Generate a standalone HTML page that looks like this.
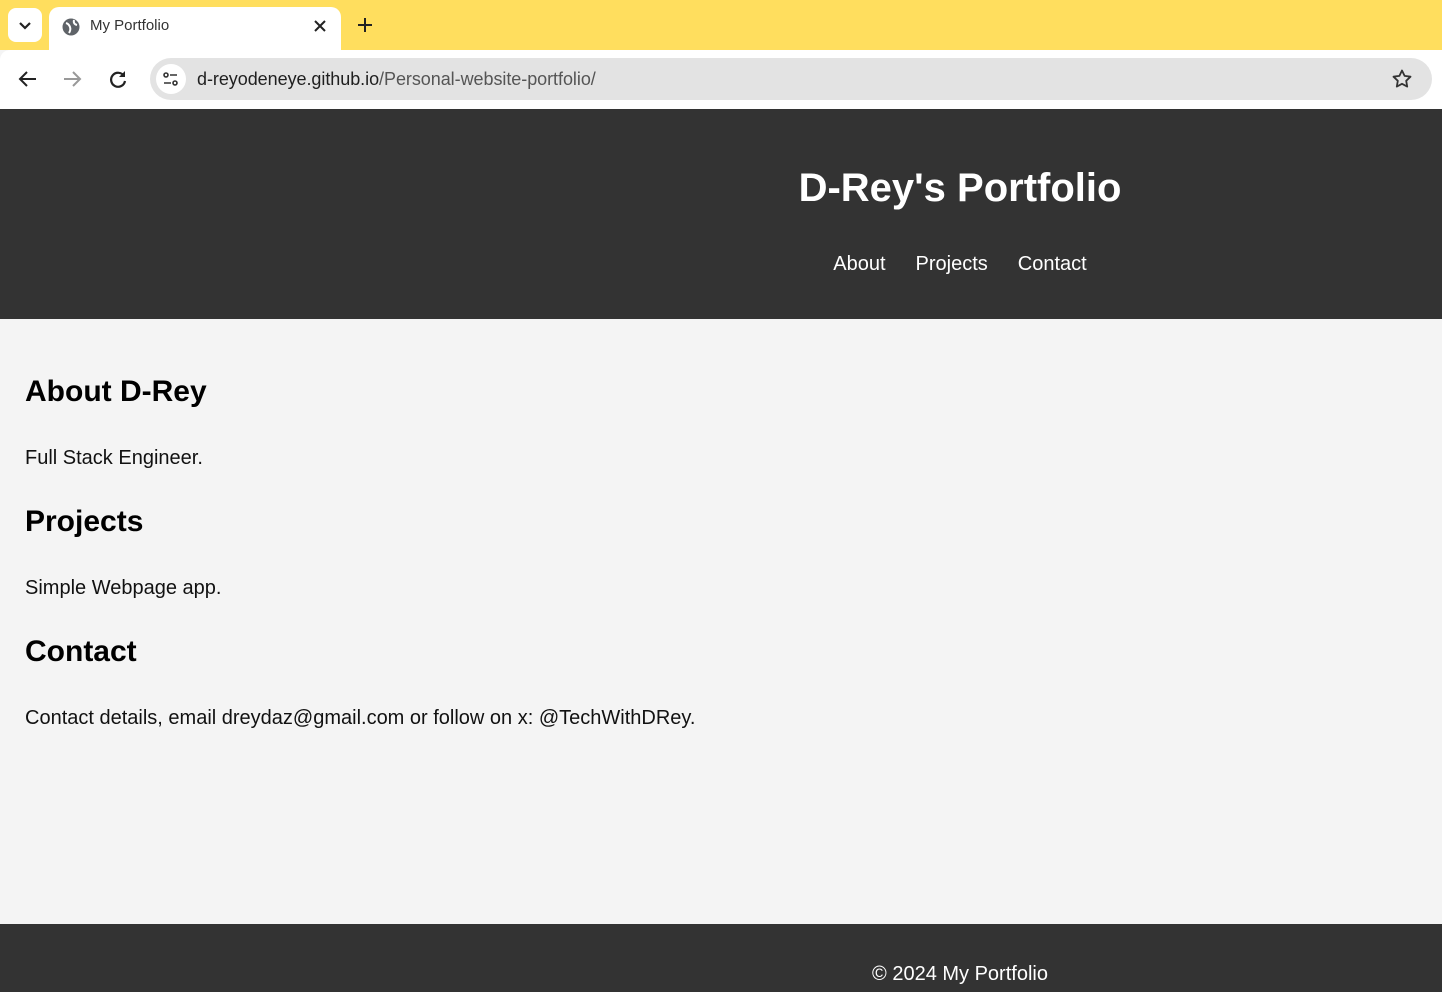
<!DOCTYPE html>
<html><head><style>
*{margin:0;padding:0;box-sizing:border-box}
body{width:1442px;height:992px;overflow:hidden;font-family:"Liberation Sans",Arial,sans-serif;background:#f4f4f4;position:relative}
.tabbar{position:absolute;top:0;left:0;width:1442px;height:50px;background:#ffde5e}
.dd{position:absolute;left:8px;top:8px;width:34px;height:34px;background:#fff;border-radius:8px}
.tab{position:absolute;left:49px;top:7px;width:292px;height:43px;background:#fff;border-radius:10px 10px 0 0}
.tab .t{position:absolute;left:41px;top:10px;font-size:15px;color:#333}
.toolbar{position:absolute;top:50px;left:0;width:1442px;height:59px;background:#fff;border-radius:10px 0 0 0}
.url{position:absolute;left:150px;top:8px;width:1282px;height:42px;background:#e3e3e3;border-radius:21px}
.url .ic{position:absolute;left:6px;top:6px;width:30px;height:30px;background:#fff;border-radius:15px}
.url .u{position:absolute;left:47px;top:11px;font-size:18px;color:#1f1f1f;letter-spacing:-0.05px}
.url .u span{color:#555}
header{position:absolute;top:109px;left:0;width:1442px;height:210px;background:#333;color:#fff}
.c{position:absolute;left:0;width:1920px;text-align:center}
h1{font-size:40px;font-weight:bold}
nav a{color:#fff;font-size:20px;margin:0 15px;text-decoration:none}
main{position:absolute;left:25px;top:372px}
h2{font-size:30px;font-weight:bold;color:#000;position:absolute;white-space:nowrap}
p{font-size:20px;position:absolute;white-space:nowrap;color:#111}
footer{position:absolute;top:924px;left:0;width:1442px;height:68px;background:#333;color:#fff}
</style></head><body>
<div class="tabbar">
 <div class="dd"><svg width="34" height="34"><path d="M12 15l5 5 5-5" stroke="#222" stroke-width="2.2" fill="none"/></svg></div>
 <div class="tab">
  <svg style="position:absolute;left:12px;top:10px" width="20" height="20"><circle cx="10" cy="10" r="8.5" fill="#5f6368"/><path d="M5 6q3 1 4 4t-1 6M13 3q-1 4 3 5" stroke="#fff" stroke-width="2" fill="none"/></svg>
  <div class="t">My Portfolio</div>
  <svg style="position:absolute;left:263px;top:11px" width="16" height="16"><path d="M3 3l10 10M13 3L3 13" stroke="#222" stroke-width="2"/></svg>
 </div>
 <svg style="position:absolute;left:357px;top:17px" width="16" height="16"><path d="M8 1v14M1 8h14" stroke="#222" stroke-width="2"/></svg>
</div>
<div class="toolbar">
 <svg style="position:absolute;left:17px;top:18px" width="22" height="22"><path d="M19 11H4M10 4l-7 7 7 7" stroke="#222" stroke-width="2" fill="none"/></svg>
 <svg style="position:absolute;left:61px;top:18px" width="22" height="22"><path d="M3 11h15M12 4l7 7-7 7" stroke="#999" stroke-width="2" fill="none"/></svg>
 <svg style="position:absolute;left:107px;top:18px" width="22" height="22"><path d="M17 8A7 7 0 1 0 18 13" stroke="#222" stroke-width="2.2" fill="none"/><path d="M18 3v6h-6z" fill="#222"/></svg>
 <div class="url"><div class="ic"><svg width="30" height="30"><circle cx="10" cy="11" r="2" fill="none" stroke="#333" stroke-width="1.6"/><path d="M14 11h7M8 19h7" stroke="#333" stroke-width="1.6"/><circle cx="19" cy="19" r="2" fill="none" stroke="#333" stroke-width="1.6"/></svg></div>
 <div class="u">d-reyodeneye.github.io<span>/Personal-website-portfolio/</span></div>
 <svg style="position:absolute;left:1242px;top:11px" width="20" height="20"><path d="M10 1.5l2.6 5.4 5.9.8-4.3 4.1 1 5.8L10 14.8l-5.2 2.8 1-5.8L1.5 7.7l5.9-.8z" fill="none" stroke="#333" stroke-width="1.8" stroke-linejoin="round"/></svg>
 </div>
</div>
<header>
 <div class="c" style="top:57px"><h1>D-Rey's Portfolio</h1></div>
 <div class="c" style="top:144px"><nav><a>About</a><a>Projects</a><a>Contact</a></nav></div>
</header>
<main>
 <h2 style="top:3px">About D-Rey</h2>
 <p style="top:75px">Full Stack Engineer.</p>
 <h2 style="top:133px">Projects</h2>
 <p style="top:205px">Simple Webpage app.</p>
 <h2 style="top:263px">Contact</h2>
 <p style="top:335px">Contact details, email dreydaz@gmail.com or follow on x: @TechWithDRey.</p>
</main>
<footer><div class="c" style="top:39px;font-size:20px">© 2024 My Portfolio</div></footer>
</body></html>
